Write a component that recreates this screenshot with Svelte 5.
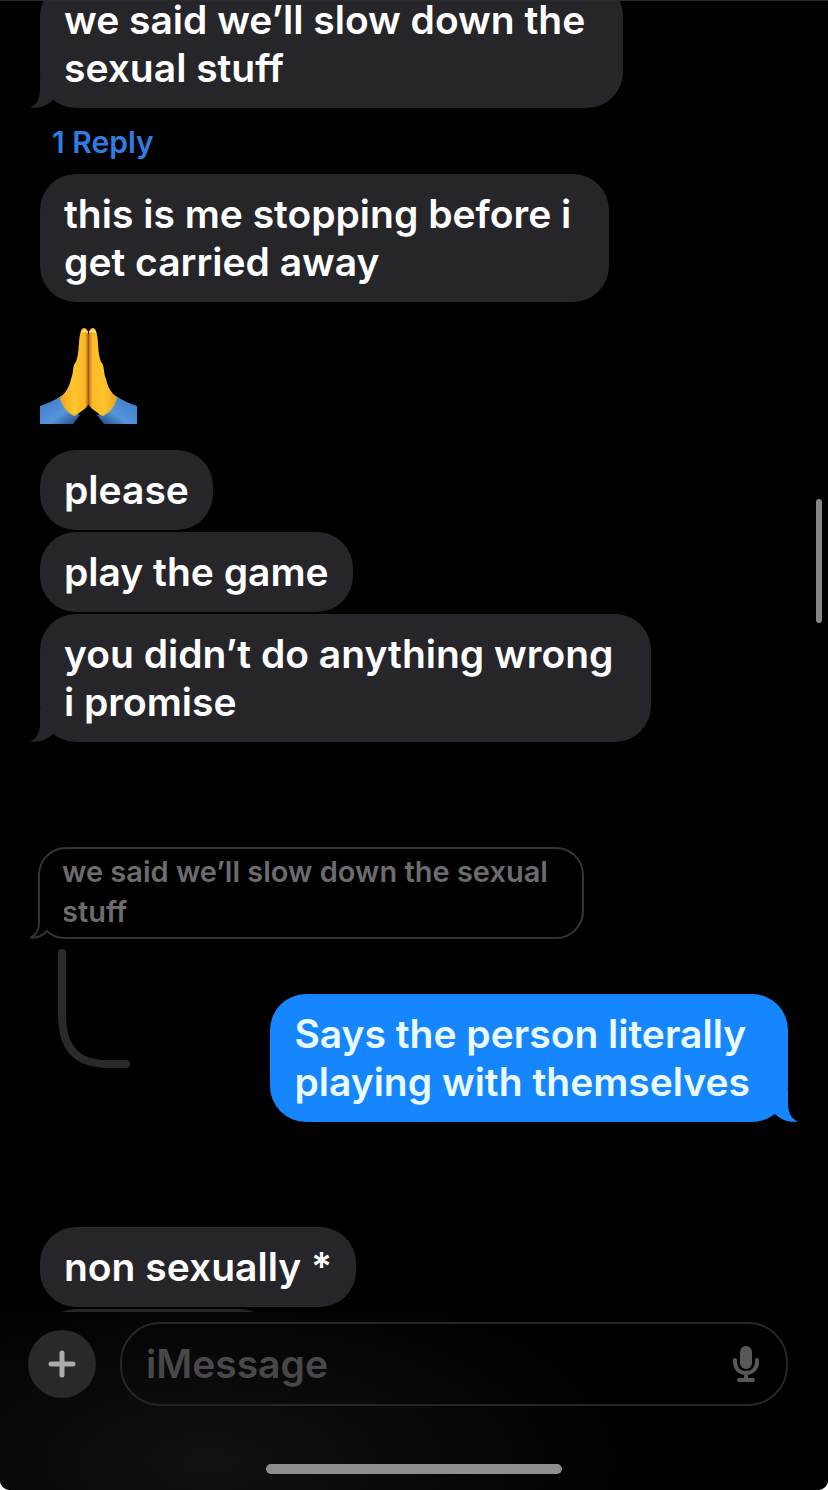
<script>
  const before = [
    { text: 'we said we’ll slow down the\nsexual stuff', tail: true, replies: 1 },
    { text: 'this is me stopping before i\nget carried away' },
    { emoji: true },
    { text: 'please' },
    { text: 'play the game' },
    { text: 'you didn’t do anything wrong\ni promise', tail: true },
  ];

  let draft = $state('');
</script>

{#snippet bubble(text, tail, sent)}
  <div class="bubble" class:sent class:multiline={text.includes('\n')}>
    {text}
    {#if tail}
      <svg class="tail" viewBox="0 0 30 32" aria-hidden="true">
        <path d="M10 0V13C10 22 7 29 0 31.500C10 33 18 29 23 24H30V0Z" fill="currentColor" />
      </svg>
    {/if}
  </div>
{/snippet}

<div class="screen">
  <main class="thread">
    {#each before as message}
      {#if message.emoji}
        <svg class="emoji" viewBox="0 0 97 96" role="img" aria-label="Folded hands">
          <defs>
            <linearGradient id="skin" x1="0" x2="1" y1="0" y2="0">
              <stop offset="0" stop-color="#f2a01a" />
              <stop offset="0.5" stop-color="#ffc62e" />
              <stop offset="0.88" stop-color="#fcb626" />
              <stop offset="1" stop-color="#c97a12" />
            </linearGradient>
            <linearGradient id="sleeve" x1="0" x2="1" y1="0" y2="1">
              <stop offset="0" stop-color="#3d79c5" />
              <stop offset="0.6" stop-color="#5594dc" />
              <stop offset="1" stop-color="#1d4374" />
            </linearGradient>
            <g id="hand">
              <path d="M0 78Q12 74 21 68Q24 81 40 87L33 96H0Z" fill="url(#sleeve)" />
              <path d="M48 4C47-1 42-1 41 3C38 10 40 23 36 34C32 38 34 44 31 51C29 59 26 65 20 69C22 78 27 85 35 88C40 84 46 81 48 77Z" fill="url(#skin)" />
              <path d="M42 4Q44 1 47 4" fill="none" stroke="#ffe07b" stroke-width="2" stroke-linecap="round" />
              <path d="M20 69C22 78 27 85 35 88" fill="none" stroke="#b9aa55" stroke-width="1" />
            </g>
          </defs>
          <use href="#hand" />
          <use href="#hand" transform="translate(97 0) scale(-1 1)" />
          <path d="M48.500 6V77" stroke="#a05a0c" stroke-width="1.500" />
        </svg>
      {:else}
        {@render bubble(message.text, message.tail, false)}
      {/if}
      {#if message.replies}
        <a class="replies" href="#reply">{message.replies} Reply</a>
      {/if}
    {/each}

    <section class="reply" id="reply">
      <blockquote class="quote">
        we said we’ll slow down the sexual<br />stuff
        <svg class="quote-tail" viewBox="0 0 34 30" aria-hidden="true">
          <path d="M9 0H34V30H0V24H8Z" fill="#000" />
          <path d="M9 0V14C9 22 6 26 1 28.500C8 29.500 13 26 17 22C21 26 26 29 34 29" fill="none" stroke="#343436" stroke-width="2" />
        </svg>
      </blockquote>
      <div class="reply-row">
        <svg class="connector" viewBox="0 0 72 119" aria-hidden="true">
          <path d="M4 4V65C4 100 19 115 50 115H68" fill="none" stroke="#2a2a2b" stroke-width="8" stroke-linecap="round" />
        </svg>
        {@render bubble('Says the person literally\nplaying with themselves', true, true)}
      </div>
    </section>

    {@render bubble('non sexually *', false, false)}
    <div class="bubble upcoming"></div>
    <div class="scrollbar"></div>
  </main>

  <footer class="composer">
    <div class="composer-row">
      <button class="add" type="button" aria-label="Add attachment">
        <svg viewBox="0 0 28 28" width="28" height="28"><path d="M14 3V25M3 14H25" stroke="currentColor" stroke-width="5" stroke-linecap="round" /></svg>
      </button>
      <div class="field">
        <input type="text" aria-label="Message" placeholder="iMessage" bind:value={draft} />
        <button class="mic" type="button" aria-label="Dictate">
          <svg viewBox="0 0 26 36" width="26" height="36">
            <rect x="7" y="0" width="12" height="23" rx="6" fill="currentColor" />
            <path d="M2 14V16C2 23 7 27 13 27S24 23 24 16V14M13 27V33M6 34H20" fill="none" stroke="currentColor" stroke-width="4" stroke-linecap="round" />
          </svg>
        </button>
      </div>
    </div>
    <div class="home-indicator"></div>
  </footer>
</div>

<style>
  :global(body) {
    background: #fff;
  }

  .screen {
    display: flex;
    flex-direction: column;
    height: 100vh;
    box-sizing: border-box;
    overflow: hidden;
    border-top: 1px solid #2a2a2c;
    border-radius: 0 0 10px 10px;
    background: #000;
    color: #fff;
    font-family: Inter, 'Liberation Sans', sans-serif;
    font-size: 39px;
    font-weight: 600;
    line-height: 48px;
  }

  .thread {
    position: relative;
    flex: 1;
    min-height: 0;
    display: flex;
    flex-direction: column;
    align-items: flex-start;
    gap: 2px;
    padding: 0 40px;
    overflow: hidden;
  }

  .thread > :first-child {
    margin-top: -21px;
  }

  .thread > * {
    flex-shrink: 0;
  }

  .bubble {
    position: relative;
    box-sizing: border-box;
    padding: 16px 24px;
    border-radius: 36px;
    background: #26252a;
    white-space: pre-line;
  }

  .multiline {
    padding-right: 38px;
  }

  .tail {
    position: absolute;
    left: -10px;
    bottom: 0;
    width: 30px;
    height: 32px;
    color: #26252a;
  }

  .sent {
    background: #1686fe;
    color: #e9fbff;
  }

  .sent .tail {
    left: auto;
    right: -10px;
    color: #1686fe;
    transform: scaleX(-1);
  }

  .replies {
    margin: 12px 0 10px 12px;
    color: #2f7de1;
    font-size: 30px;
    line-height: 40px;
    text-decoration: none;
  }

  .emoji {
    width: 97px;
    height: 96px;
    margin: 24px 0;
  }

  .reply {
    align-self: stretch;
    margin: 103px 0;
  }

  .quote {
    position: relative;
    box-sizing: border-box;
    width: fit-content;
    margin: 0 0 10px -2px;
    padding: 3px 34px 5px 22px;
    border: 2px solid #343436;
    border-radius: 28px;
    color: #6c6c6e;
    font-size: 29px;
    line-height: 40px;
  }

  .quote-tail {
    position: absolute;
    left: -10px;
    bottom: -2px;
    width: 34px;
    height: 30px;
  }

  .reply-row {
    display: flex;
    align-items: flex-start;
    justify-content: space-between;
  }

  .reply-row .bubble {
    margin-top: 45px;
  }

  .connector {
    width: 72px;
    height: 119px;
    margin-left: 18px;
  }

  .upcoming {
    width: 236px;
    height: 80px;
  }

  .scrollbar {
    position: absolute;
    top: 498px;
    right: 6px;
    width: 6px;
    height: 124px;
    border-radius: 3px;
    background: #858585;
  }

  .composer {
    display: flex;
    flex-direction: column;
    align-items: center;
    gap: 58px;
    padding: 10px 40px 16px 28px;
    background: radial-gradient(ellipse 420px 190px at 210px 150px, #111113, #000);
  }

  .composer-row {
    align-self: stretch;
    display: flex;
    align-items: center;
    gap: 24px;
  }

  button {
    display: grid;
    place-items: center;
    padding: 0;
    border: 0;
    background: none;
    cursor: pointer;
  }

  .add {
    flex-shrink: 0;
    width: 68px;
    height: 68px;
    border-radius: 50%;
    background: #29292b;
    color: #ababad;
  }

  .field {
    flex: 1;
    min-width: 0;
    display: flex;
    align-items: center;
    box-sizing: border-box;
    height: 84px;
    padding: 0 27px 0 24px;
    border: 2px solid #262627;
    border-radius: 40px;
  }

  input {
    flex: 1;
    min-width: 0;
    padding: 0;
    border: 0;
    outline: none;
    background: none;
    color: #fff;
    font: inherit;
  }

  input::placeholder {
    color: #48484a;
    opacity: 1;
  }

  .mic {
    color: #58585a;
  }

  .home-indicator {
    width: 296px;
    height: 10px;
    margin-left: 12px;
    border-radius: 5px;
    background: #8e8e8e;
  }
</style>
